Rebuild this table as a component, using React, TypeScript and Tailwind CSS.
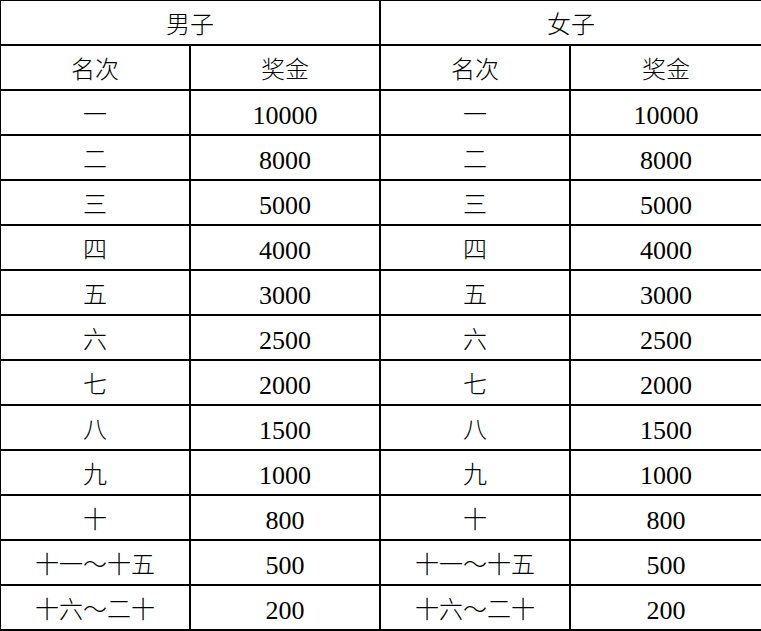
import React from "react";

const rows: [string, string][] = [
  ["一", "10000"],
  ["二", "8000"],
  ["三", "5000"],
  ["四", "4000"],
  ["五", "3000"],
  ["六", "2500"],
  ["七", "2000"],
  ["八", "1500"],
  ["九", "1000"],
  ["十", "800"],
  ["十一～十五", "500"],
  ["十六～二十", "200"],
];

const cjk = "border-2 border-black text-center align-middle px-0 pb-0 pt-[4px] font-light";
const num = "border-2 border-black text-center align-middle px-0 pb-0 pt-[6px] text-[26px]";

export default function App() {
  return (
    <div className="w-[761px] h-[631px] overflow-hidden bg-white">
      <table
        className="border-collapse table-fixed w-[762px] -ml-px -mt-px text-black text-[24px] leading-none"
        style={{ fontFamily: '"Liberation Serif", "Noto Sans CJK SC", serif' }}
      >
        <colgroup>
          <col className="w-[190px]" />
          <col className="w-[190px]" />
          <col className="w-[190px]" />
          <col className="w-[192px]" />
        </colgroup>
        <tbody>
          <tr className="h-[45px]">
            <td className={cjk} colSpan={2}>男子</td>
            <td className={cjk} colSpan={2}>女子</td>
          </tr>
          <tr className="h-[45px]">
            <td className={cjk}>名次</td>
            <td className={cjk}>奖金</td>
            <td className={cjk}>名次</td>
            <td className={cjk}>奖金</td>
          </tr>
          {rows.map(([r, p], i) => (
            <tr key={i} className="h-[45px]">
              <td className={cjk}>{r}</td>
              <td className={num}>{p}</td>
              <td className={cjk}>{r}</td>
              <td className={num}>{p}</td>
            </tr>
          ))}
        </tbody>
      </table>
    </div>
  );
}
